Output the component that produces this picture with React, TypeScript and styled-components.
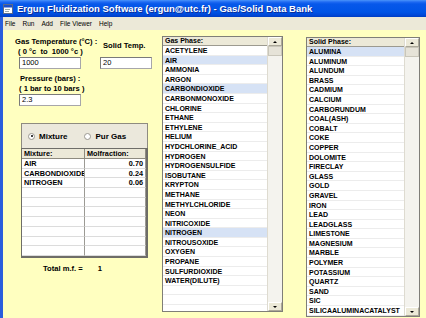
import React from 'react';
import styled, { createGlobalStyle } from 'styled-components';

const NARROW = `"Liberation Sans Narrow", "Liberation Sans", Arial, sans-serif`;

const GlobalStyle = createGlobalStyle`
  html, body { margin: 0; padding: 0; }
  body { width: 426px; height: 318px; overflow: hidden; background: #ffffc0; }
`;

const Window = styled.div`
  width: 426px;
  height: 318px;
  display: flex;
  flex-direction: column;
  overflow: hidden;
  font-family: ${NARROW};
  color: #000;
`;

const TitleBar = styled.div`
  height: 17px;
  flex: none;
  display: flex;
  align-items: center;
  gap: 4px;
  padding-left: 3px;
  background: linear-gradient(#4a94fa 0, #1f6af2 2px, #0758ea 4px, #0054e6 12px, #0048d8 15px, #003dc2 17px);
  color: #fff;
  font-weight: bold;
  font-size: 9.5px;
  text-shadow: 1px 1px 0 #0b2d98;
  white-space: nowrap;
`;

const Frame = styled.div`
  flex: 1;
  display: flex;
  flex-direction: column;
  min-height: 0;
  border-left: 3px solid #2a5ddc;
`;

const MenuBar = styled.div`
  height: 13px;
  flex: none;
  display: flex;
  align-items: center;
  gap: 7px;
  padding-left: 2px;
  background: #ece9d8;
  font-family: "Liberation Sans", Arial, sans-serif;
  font-size: 6.5px;
`;

const MenuItem = styled.span``;

const Client = styled.div`
  flex: 1;
  display: flex;
  align-items: flex-start;
  background: #ffffc0;
  min-height: 0;
  overflow: hidden;
`;

const LeftPanel = styled.div`
  width: 159px;
  flex: none;
  display: flex;
  flex-direction: column;
  padding-top: 7px;
  box-sizing: border-box;
`;

const TopRow = styled.div`
  display: flex;
  align-items: flex-end;
  padding-left: 12px;
`;

const FieldGroup = styled.div<{ $w: number }>`
  width: ${p => p.$w}px;
  display: flex;
  flex-direction: column;
`;

const Label = styled.div<{ $indent?: number; $gap?: number }>`
  font-size: 7.6px;
  font-weight: bold;
  line-height: 10px;
  white-space: nowrap;
  padding-left: ${p => p.$indent || 0}px;
  margin-bottom: ${p => p.$gap || 0}px;
`;

const Input = styled.div<{ $w: number; $indent?: number }>`
  width: ${p => p.$w}px;
  height: 12px;
  margin-left: ${p => p.$indent || 0}px;
  box-sizing: border-box;
  background: #fff;
  border: 1px solid #a7a6aa;
  border-top-color: #7a7a7a;
  border-left-color: #7a7a7a;
  font-family: "Liberation Sans", Arial, sans-serif;
  font-size: 7.5px;
  line-height: 10px;
  padding-left: 2px;
`;

const PressureBlock = styled.div`
  display: flex;
  flex-direction: column;
  margin-top: 5px;
  padding-left: 16px;
`;

const RadioBox = styled.div`
  margin: 17px 0 0 18px;
  width: 127px;
  height: 25px;
  box-sizing: border-box;
  background: #ebe8dc;
  border: 1px solid #8e8b80;
  border-bottom: none;
  display: flex;
  align-items: center;
  padding-left: 6px;
  gap: 17px;
`;

const RadioOption = styled.label`
  display: flex;
  align-items: center;
  gap: 4px;
  font-size: 8px;
  font-weight: bold;
`;

const RadioDot = styled.span<{ $on?: boolean }>`
  width: 5px;
  height: 5px;
  border-radius: 50%;
  border: 1px solid #9a9890;
  background: #fff;
  display: flex;
  align-items: center;
  justify-content: center;
  &::after {
    content: '';
    width: 2px;
    height: 2px;
    border-radius: 50%;
    background: ${p => (p.$on ? '#000' : 'transparent')};
  }
`;

const Grid = styled.div`
  margin-left: 18px;
  width: 127px;
  box-sizing: border-box;
  border: 1px solid #6e6d68;
  border-bottom-width: 2px;
  border-right-width: 2px;
  display: grid;
  grid-template-columns: 63px 1fr;
  background: #fff;
`;

const GridHead = styled.div`
  height: 10px;
  box-sizing: border-box;
  background: #ece9d8;
  border-right: 1px solid #8e8b80;
  border-bottom: 1px solid #8e8b80;
  font-size: 7.3px;
  font-weight: bold;
  line-height: 9px;
  padding-left: 2px;
  white-space: nowrap;
  overflow: hidden;
`;

const GridCell = styled.div<{ $right?: boolean }>`
  height: 9.7px;
  box-sizing: border-box;
  border-right: 1px solid #9c9a94;
  border-bottom: 1px solid #dcdcdc;
  font-size: 7.3px;
  font-weight: bold;
  line-height: 9px;
  padding: 0 2px;
  text-align: ${p => (p.$right ? 'right' : 'left')};
  white-space: nowrap;
  overflow: hidden;
`;

const Total = styled.div`
  margin-top: 6px;
  padding-left: 40px;
  font-size: 7.6px;
  font-weight: bold;
  display: flex;
  gap: 15px;
`;

const ListBox = styled.div<{ $w: number; $h: number; $top: number; $left: number }>`
  flex: none;
  width: ${p => p.$w}px;
  height: ${p => p.$h}px;
  margin-top: ${p => p.$top}px;
  margin-left: ${p => p.$left}px;
  box-sizing: border-box;
  border: 1px solid #7f7e78;
  background: #fff;
  display: flex;
  overflow: hidden;
`;

const ListBody = styled.div`
  flex: 1;
  min-width: 0;
  display: flex;
  flex-direction: column;
`;

const ListHead = styled.div`
  height: 9px;
  flex: none;
  box-sizing: border-box;
  background: #ece9d8;
  border-bottom: 1px solid #9c9a90;
  font-size: 7px;
  font-weight: bold;
  line-height: 8px;
  padding-left: 2px;
`;

const ListRow = styled.div<{ $sel?: boolean }>`
  height: 9.6px;
  flex: none;
  box-sizing: border-box;
  background: ${p => (p.$sel ? '#d6e2f5' : '#fff')};
  border-bottom: 1px solid #ececec;
  font-size: 7px;
  font-weight: bold;
  line-height: 9px;
  padding-left: 2px;
  white-space: nowrap;
  overflow: hidden;
`;

const ScrollBar = styled.div`
  width: 14px;
  flex: none;
  display: flex;
  flex-direction: column;
  background: #f4f3ee;
  border-left: 1px solid #dedbd0;
`;

const ScrollBtn = styled.div<{ $down?: boolean }>`
  height: 9px;
  flex: none;
  box-sizing: border-box;
  background: #ece9d8;
  border: 1px solid #fff;
  border-right-color: #aca899;
  border-bottom-color: #aca899;
  display: flex;
  align-items: center;
  justify-content: center;
  &::after {
    content: '';
    border-left: 2px solid transparent;
    border-right: 2px solid transparent;
    ${p => (p.$down ? 'border-top: 2px solid #000;' : 'border-bottom: 2px solid #000;')}
  }
`;

const Thumb = styled.div`
  height: 10px;
  flex: none;
  box-sizing: border-box;
  background: #e6e3d8;
  border: 1px solid #c9c6ba;
`;

const Track = styled.div`
  flex: 1;
`;

const gases = [
  'ACETYLENE', 'AIR', 'AMMONIA', 'ARGON', 'CARBONDIOXIDE', 'CARBONMONOXIDE', 'CHLORINE',
  'ETHANE', 'ETHYLENE', 'HELIUM', 'HYDCHLORINE_ACID', 'HYDROGEN', 'HYDROGENSULFIDE',
  'ISOBUTANE', 'KRYPTON', 'METHANE', 'METHYLCHLORIDE', 'NEON', 'NITRICOXIDE', 'NITROGEN',
  'NITROUSOXIDE', 'OXYGEN', 'PROPANE', 'SULFURDIOXIDE', 'WATER(DILUTE)', '', '', '',
];

const solids = [
  'ALUMINA', 'ALUMINUM', 'ALUNDUM', 'BRASS', 'CADMIUM', 'CALCIUM', 'CARBORUNDUM',
  'COAL(ASH)', 'COBALT', 'COKE', 'COPPER', 'DOLOMITE', 'FIRECLAY', 'GLASS', 'GOLD',
  'GRAVEL', 'IRON', 'LEAD', 'LEADGLASS', 'LIMESTONE', 'MAGNESIUM', 'MARBLE', 'POLYMER',
  'POTASSIUM', 'QUARTZ', 'SAND', 'SIC', 'SILICAALUMINACATALYST',
];

const mixture = [
  ['AIR', '0.70'],
  ['CARBONDIOXIDE', '0.24'],
  ['NITROGEN', '0.06'],
];

const AppIcon = () => (
  <svg width="10" height="10" viewBox="0 0 10 10">
    <rect x="0.5" y="0.5" width="9" height="9" fill="#fff" stroke="#5a6a8a" />
    <rect x="1" y="1" width="8" height="2.5" fill="#1c4fc8" />
    <rect x="2" y="5" width="5" height="1" fill="#9aa" />
    <rect x="2" y="7" width="4" height="1" fill="#9aa" />
  </svg>
);

const DataList: React.FC<any> = ({ title, items, selected, w, h, top, left }) => (
  <ListBox $w={w} $h={h} $top={top} $left={left}>
    <ListBody>
      <ListHead>{title}</ListHead>
      {items.map((it: string, i: number) => (
        <ListRow key={i} $sel={selected.includes(it)}>{it}</ListRow>
      ))}
    </ListBody>
    <ScrollBar>
      <ScrollBtn />
      <Thumb />
      <Track />
      <ScrollBtn $down />
    </ScrollBar>
  </ListBox>
);

const App = () => {
  const rows = [...mixture];
  while (rows.length < 10) rows.push(['', '']);

  return (
    <Window>
      <GlobalStyle />
      <TitleBar>
        <AppIcon />
        Ergun Fluidization Software (ergun@utc.fr) - Gas/Solid Data Bank
      </TitleBar>
      <Frame>
        <MenuBar>
          <MenuItem>File</MenuItem>
          <MenuItem>Run</MenuItem>
          <MenuItem>Add</MenuItem>
          <MenuItem>File Viewer</MenuItem>
          <MenuItem>Help</MenuItem>
        </MenuBar>
        <Client>
          <LeftPanel>
            <TopRow>
              <FieldGroup $w={85}>
                <Label>Gas Temperature (°C) :</Label>
                <Label $indent={3}>( 0 °c&nbsp; to&nbsp; 1000 °c )</Label>
                <Input $w={62} $indent={4}>1000</Input>
              </FieldGroup>
              <FieldGroup $w={55}>
                <Label $indent={3} $gap={6}>Solid Temp.</Label>
                <Input $w={52}>20</Input>
              </FieldGroup>
            </TopRow>
            <PressureBlock>
              <Label $indent={1}>Pressure (bars) :</Label>
              <Label>( 1 bar to 10 bars )</Label>
              <Input $w={62}>2.3</Input>
            </PressureBlock>
            <RadioBox>
              <RadioOption><RadioDot $on />Mixture</RadioOption>
              <RadioOption><RadioDot />Pur Gas</RadioOption>
            </RadioBox>
            <Grid>
              <GridHead>Mixture:</GridHead>
              <GridHead>Molfraction:</GridHead>
              {rows.map((r, i) => (
                <React.Fragment key={i}>
                  <GridCell>{r[0]}</GridCell>
                  <GridCell $right>{r[1]}</GridCell>
                </React.Fragment>
              ))}
            </Grid>
            <Total>
              <span>Total m.f. =</span>
              <span>1</span>
            </Total>
          </LeftPanel>
          <DataList title="Gas Phase:" items={gases} selected={['AIR', 'CARBONDIOXIDE', 'NITROGEN']} w={121} h={276} top={6} left={0} />
          <DataList title="Solid Phase:" items={solids} selected={['ALUMINA']} w={114} h={280} top={7} left={23} />
        </Client>
      </Frame>
    </Window>
  );
};

export default App;
